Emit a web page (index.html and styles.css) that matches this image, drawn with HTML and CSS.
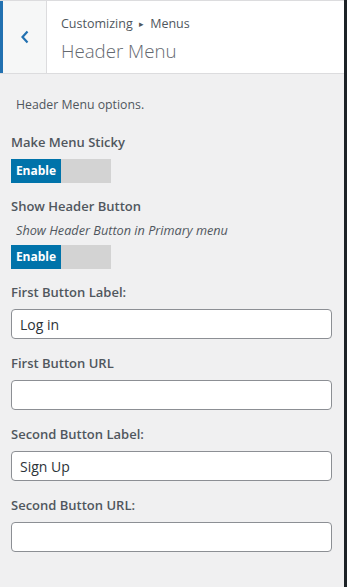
FILE: index.html
```html
<!DOCTYPE html>
<html lang="en">
<head>
  <meta charset="UTF-8">
  <title>Header Menu</title>
  <link rel="stylesheet" href="styles.css">
</head>
<body>
  <div class="panel">
    <div class="panel-header">
      <button class="back" aria-label="Back">
        <svg width="10" height="14" viewBox="0 0 10 14"><path d="M7.5 1.5 L2.5 7 L7.5 12.5" fill="none" stroke="#2271b1" stroke-width="2.2"/></svg>
      </button>
      <div class="panel-title">
        <span class="crumb">Customizing <span class="arrow">&#9656;</span> Menus</span>
        <h3>Header Menu</h3>
      </div>
    </div>

    <div class="controls">
      <p class="desc">Header Menu options.</p>

      <div class="control sm">
        <span class="label">Make Menu Sticky</span>
        <div class="toggle"><span class="on">Enable</span></div>
      </div>

      <div class="control sm">
        <span class="label">Show Header Button</span>
        <span class="note">Show Header Button in Primary menu</span>
        <div class="toggle"><span class="on">Enable</span></div>
      </div>

      <div class="control">
        <span class="label">First Button Label:</span>
        <input type="text" value="Log in">
      </div>

      <div class="control">
        <span class="label">First Button URL</span>
        <input type="text" value="">
      </div>

      <div class="control">
        <span class="label">Second Button Label:</span>
        <input type="text" value="Sign Up">
      </div>

      <div class="control">
        <span class="label">Second Button URL:</span>
        <input type="text" value="">
      </div>
    </div>
  </div>
</body>
</html>
```

FILE: styles.css
```css
body {
  margin: 0;
  background-color: #1d2327;
  font-family: 'Segoe UI', 'Open Sans', sans-serif;
  color: #50575e;
}

.panel {
  width: 344px;
  min-height: 100vh;
  background-color: #f0f0f1;
}

.panel-header {
  display: flex;
  height: 72px;
  background-color: #fff;
  border-top: 1px solid #dcdcde;
  border-bottom: 1px solid #dcdcde;
}

.back {
  width: 47px;
  padding: 0;
  border: none;
  border-left: 3px solid #2271b1;
  border-right: 1px solid #dcdcde;
  background-color: #f6f7f7;
  display: flex;
  align-items: center;
  justify-content: center;
}

.panel-title {
  padding: 14px 0 0 14px;
}

.crumb {
  display: block;
  font-size: 12.5px;
  line-height: 18px;
  color: #50575e;
}

.arrow {
  font-size: 9px;
  vertical-align: 1px;
  margin: 0 3px;
}

.panel-title h3 {
  margin: 5px 0 0;
  font-size: 18.7px;
  font-weight: 300;
  line-height: 26px;
  color: #646970;
}

.controls {
  padding: 22px 12px 0 11px;
}

.desc {
  margin: 0 0 18px 5px;
  font-size: 12.3px;
  line-height: 18px;
}

.control {
  margin-bottom: 14px;
}

.control.sm {
  margin-bottom: 13px;
}

.label {
  display: block;
  font-size: 13px;
  font-weight: 600;
  line-height: 20px;
  margin-bottom: 7px;
}

.note {
  display: block;
  font-size: 12.7px;
  font-style: italic;
  line-height: 18px;
  margin: -2px 0 6px 5px;
}

.toggle {
  width: 100px;
  height: 24px;
  background-color: #d3d3d3;
  display: flex;
}

.toggle .on {
  width: 50px;
  background-color: #0073aa;
  color: #fff;
  font-size: 12px;
  font-weight: 700;
  line-height: 24px;
  text-align: center;
}

input {
  display: block;
  box-sizing: border-box;
  width: 321px;
  height: 30px;
  margin: 0;
  padding: 0 8px;
  font-family: inherit;
  font-size: 14px;
  color: #2c3338;
  background-color: #fff;
  border: 1px solid #8c8f94;
  border-radius: 4px;
}
```
